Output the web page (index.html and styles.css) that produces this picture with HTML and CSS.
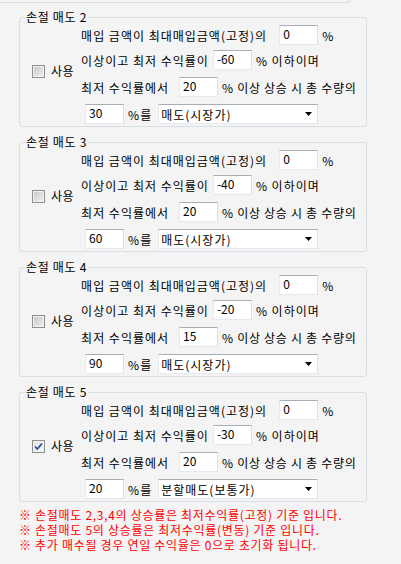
FILE: index.html
```html
<!DOCTYPE html>
<html>
<head>
  <meta charset="utf-8">
  <title>손절 매도 설정</title>
  <link rel="stylesheet" href="styles.css">
</head>
<body>
  <div class="prev-group"></div>
  <div class="container">
    <div class="groups">
      <fieldset class="group">
        <legend>손절 매도 2</legend>
        <div class="group-body">
          <label class="use"><span class="check"></span>사용</label>
          <div class="rows">
            <div class="row row-1">
              <span>매입 금액이 최대매입금액(고정)의</span>
              <input class="num" type="text" value="0">
              <span>%</span>
            </div>
            <div class="row row-2">
              <span>이상이고 최저 수익률이</span>
              <input class="num" type="text" value="-60">
              <span>% 이하이며</span>
            </div>
            <div class="row row-3">
              <span>최저 수익률에서</span>
              <input class="num" type="text" value="20">
              <span>% 이상 상승 시 총 수량의</span>
            </div>
            <div class="row row-4">
              <input class="num" type="text" value="30">
              <span>%를</span>
              <div class="combo">
                <span>매도(시장가)</span>
                <svg width="7" height="4" viewBox="0 0 7 4"><polygon points="0,0 7,0 3.5,4" fill="#000"/></svg>
              </div>
            </div>
          </div>
        </div>
      </fieldset>

      <fieldset class="group">
        <legend>손절 매도 3</legend>
        <div class="group-body">
          <label class="use"><span class="check"></span>사용</label>
          <div class="rows">
            <div class="row row-1">
              <span>매입 금액이 최대매입금액(고정)의</span>
              <input class="num" type="text" value="0">
              <span>%</span>
            </div>
            <div class="row row-2">
              <span>이상이고 최저 수익률이</span>
              <input class="num" type="text" value="-40">
              <span>% 이하이며</span>
            </div>
            <div class="row row-3">
              <span>최저 수익률에서</span>
              <input class="num" type="text" value="20">
              <span>% 이상 상승 시 총 수량의</span>
            </div>
            <div class="row row-4">
              <input class="num" type="text" value="60">
              <span>%를</span>
              <div class="combo">
                <span>매도(시장가)</span>
                <svg width="7" height="4" viewBox="0 0 7 4"><polygon points="0,0 7,0 3.5,4" fill="#000"/></svg>
              </div>
            </div>
          </div>
        </div>
      </fieldset>

      <fieldset class="group">
        <legend>손절 매도 4</legend>
        <div class="group-body">
          <label class="use"><span class="check"></span>사용</label>
          <div class="rows">
            <div class="row row-1">
              <span>매입 금액이 최대매입금액(고정)의</span>
              <input class="num" type="text" value="0">
              <span>%</span>
            </div>
            <div class="row row-2">
              <span>이상이고 최저 수익률이</span>
              <input class="num" type="text" value="-20">
              <span>% 이하이며</span>
            </div>
            <div class="row row-3">
              <span>최저 수익률에서</span>
              <input class="num" type="text" value="15">
              <span>% 이상 상승 시 총 수량의</span>
            </div>
            <div class="row row-4">
              <input class="num" type="text" value="90">
              <span>%를</span>
              <div class="combo">
                <span>매도(시장가)</span>
                <svg width="7" height="4" viewBox="0 0 7 4"><polygon points="0,0 7,0 3.5,4" fill="#000"/></svg>
              </div>
            </div>
          </div>
        </div>
      </fieldset>

      <fieldset class="group">
        <legend>손절 매도 5</legend>
        <div class="group-body">
          <label class="use">
            <span class="check on">
              <svg width="11" height="11" viewBox="0 0 11 11"><path d="M2 5.5 L4.3 8 L9 2.5" fill="none" stroke="#2c4a9e" stroke-width="1.8"/></svg>
            </span>사용
          </label>
          <div class="rows">
            <div class="row row-1">
              <span>매입 금액이 최대매입금액(고정)의</span>
              <input class="num" type="text" value="0">
              <span>%</span>
            </div>
            <div class="row row-2">
              <span>이상이고 최저 수익률이</span>
              <input class="num" type="text" value="-30">
              <span>% 이하이며</span>
            </div>
            <div class="row row-3">
              <span>최저 수익률에서</span>
              <input class="num" type="text" value="20">
              <span>% 이상 상승 시 총 수량의</span>
            </div>
            <div class="row row-4">
              <input class="num" type="text" value="20">
              <span>%를</span>
              <div class="combo">
                <span>분할매도(보통가)</span>
                <svg width="7" height="4" viewBox="0 0 7 4"><polygon points="0,0 7,0 3.5,4" fill="#000"/></svg>
              </div>
            </div>
          </div>
        </div>
      </fieldset>
    </div>

    <div class="notes">
      <p>※ 손절매도 2,3,4의 상승률은 최저수익률(고정) 기준 입니다.</p>
      <p>※ 손절매도 5의 상승률은 최저수익률(변동) 기준 입니다.</p>
      <p>※ 추가 매수될 경우 연일 수익율은 0으로 초기화 됩니다.</p>
    </div>
  </div>
</body>
</html>
```

FILE: styles.css
```css
/* 손절 매도 설정 */

body {
  margin: 0;
  padding: 0;
  background-color: #f4f4f4;
  font-family: "Noto Sans CJK KR", sans-serif;
  font-size: 12px;
  color: #000;
  overflow: hidden;
  letter-spacing: 1px;
}

.prev-group {
  margin-left: -10px;
  width: 359px;
  height: 2px;
  border-right: 1px solid #d5dfe5;
  border-bottom: 1px solid #d5dfe5;
  border-bottom-right-radius: 3px;
}

.container {
  padding: 7px 0 0 19px;
}

.groups {
  display: flex;
  flex-direction: column;
  gap: 8px;
}

.group {
  margin: 0;
  padding: 0 0 2px;
  width: 348px;
  min-width: 0;
  box-sizing: border-box;
  border: 1px solid #d5dfe5;
  border-radius: 3px;
}

.group legend {
  margin-left: 5px;
  padding: 0 1px;
  line-height: 14px;
  letter-spacing: 0.7px;
}

.group-body {
  display: flex;
  align-items: center;
  padding-top: 1px;
}

.use {
  display: flex;
  align-items: center;
  gap: 6px;
  padding-left: 12px;
  margin-right: 7px;
  margin-bottom: 7px;
  line-height: 14px;
  letter-spacing: 0.5px;
}

.check {
  display: flex;
  align-items: center;
  justify-content: center;
  width: 13px;
  height: 13px;
  box-sizing: border-box;
  border: 1px solid #8e8f8f;
  background: linear-gradient(135deg, #c3c6cb, #f1f1f1);
  box-shadow: inset 0 0 0 1px #f2f2f2;
}

.check.on {
  background: linear-gradient(135deg, #dcdfe4, #fafafa);
}

.rows {
  display: flex;
  flex-direction: column;
}

.row {
  display: flex;
  align-items: center;
  gap: 4px;
  height: 20px;
  white-space: nowrap;
}

.row-1 {
  margin-bottom: 5px;
}

.row-1 .num {
  margin-left: 8px;
}

.row-2 {
  margin-bottom: 7px;
}

.row-3 {
  margin-bottom: 7px;
}

.row-3 .num {
  margin-left: 6px;
}

.row-3 .num + span {
  letter-spacing: 0.7px;
}

.row-4 {
  padding-left: 4px;
}

.num {
  width: 39px;
  height: 20px;
  margin: 0;
  padding: 0 3px 3px;
  box-sizing: border-box;
  border: 1px solid #e3e9ef;
  border-top-color: #abadb3;
  border-right-color: #dbdfe6;
  background-color: #fff;
  font-family: inherit;
  font-size: 12px;
  letter-spacing: 0;
  color: #000;
  outline: none;
}

.combo {
  display: flex;
  align-items: center;
  justify-content: space-between;
  width: 160px;
  height: 20px;
  margin-left: 2px;
  padding: 0 5px 0 2px;
  box-sizing: border-box;
  border: 1px solid #e3e9ef;
  border-top-color: #abadb3;
  border-right-color: #dbdfe6;
  background-color: #fff;
}

.notes {
  padding-top: 5px;
  color: #ff0000;
  line-height: 15px;
  letter-spacing: 0.7px;
}

.notes p {
  margin: 0;
}
```
